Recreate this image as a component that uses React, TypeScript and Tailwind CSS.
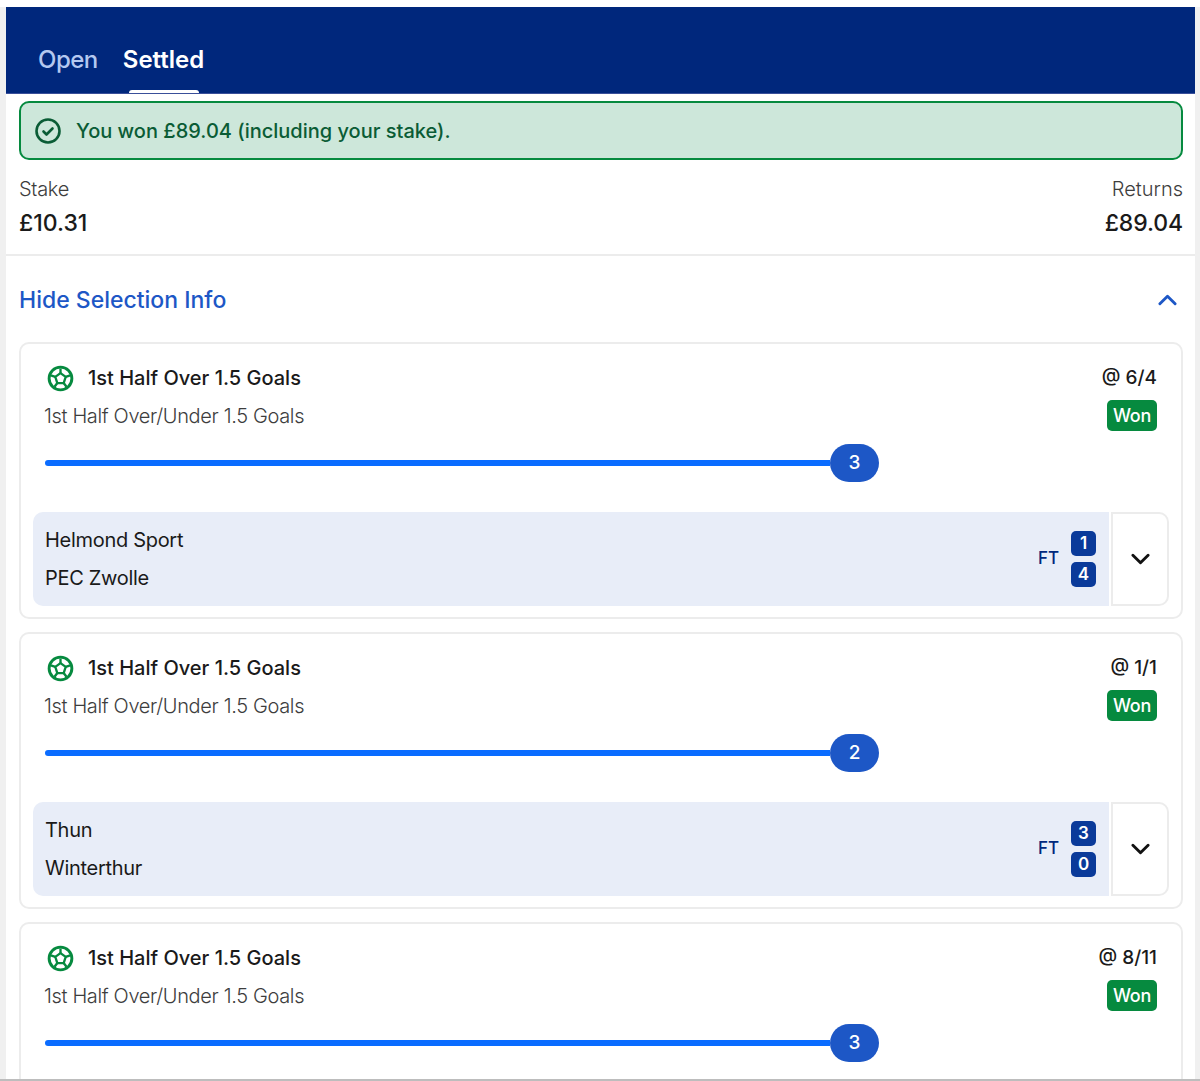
const font = { fontFamily: 'Inter, "Noto Sans", sans-serif' };

function Football() {
  return (
    <svg viewBox="0 0 28 28" className="w-[27px] h-[27px] shrink-0" fill="none" stroke="#068a3f" strokeWidth="3" strokeLinejoin="round">
      <circle cx="14" cy="14" r="11.8" />
      <path d="M14 8.4l5.4 3.9-2.1 6.4h-6.6l-2.1-6.4z" strokeWidth="2.4" />
      <path d="M14 8.4V3.5M19.4 12.3l4.6-1.5M17.3 18.7l2.9 3.9M10.7 18.7l-2.9 3.9M8.6 12.3l-4.6-1.5" strokeWidth="2.4" />
    </svg>
  );
}

function Chevron({ up, color, className }: { up?: boolean; color: string; className?: string }) {
  return (
    <svg viewBox="0 0 20 12" className={className} fill="none" stroke={color} strokeWidth="3" strokeLinecap="round" strokeLinejoin="round">
      <path d={up ? "M2 10l8-8 8 8" : "M2 2l8 8 8-8"} />
    </svg>
  );
}

function Score({ value }: { value: number }) {
  return (
    <div className="w-[25px] h-[25px] rounded-[5px] bg-[#0a3a9a] text-white text-[17px] font-semibold flex items-center justify-center">
      {value}
    </div>
  );
}

type Leg = { odds: string; count: number; home?: string; away?: string; scores?: number[] };

const legs: Leg[] = [
  { odds: "@ 6/4", count: 3, home: "Helmond Sport", away: "PEC Zwolle", scores: [1, 4] },
  { odds: "@ 1/1", count: 2, home: "Thun", away: "Winterthur", scores: [3, 0] },
  { odds: "@ 8/11", count: 3 },
];

function LegCard({ leg }: { leg: Leg }) {
  return (
    <div className="h-[277px] shrink-0 rounded-[10px] border-2 border-[#ececec] bg-white px-[12px]">
      <div className="flex justify-between pl-[11px] pr-[12px] pt-[14px]">
        <div>
          <div className="flex items-center gap-[14px] h-[40px] pl-[3px]">
            <Football />
            <span className="text-[20px] font-medium text-[#1a1a1a]">1st Half Over 1.5 Goals</span>
          </div>
          <div className="text-[20px] leading-[36px] font-light text-[#3d3d3d] tracking-[-0.35px]">1st Half Over/Under 1.5 Goals</div>
        </div>
        <div className="flex flex-col items-end">
          <span className="h-[40px] flex items-center text-[19px] font-medium text-[#1a1a1a]">{leg.odds}</span>
          <span className="mt-[2px] h-[31px] w-[50px] rounded-[5px] bg-[#068a3f] text-white text-[18px] font-medium tracking-[-0.2px] flex items-center justify-center">Won</span>
        </div>
      </div>
      <div className="flex items-center mt-[9px] h-[40px]">
        <div className="w-[785px] ml-[12px] h-[6px] rounded-l-full bg-[#0a6cff]" />
        <div className="w-[49px] h-[38px] rounded-[19px] bg-[#1d57c6] text-white text-[19px] font-medium flex items-center justify-center">
          {leg.count}
        </div>
      </div>
      {leg.home && (
        <div className="flex mt-[29px] h-[94px] gap-[2px]">
          <div className="flex-1 flex items-center justify-between rounded-l-[10px] bg-[#e8edf8] pl-[12px] pr-[13px]">
            <div className="text-[20px] leading-[38px] text-[#1a1a1a] tracking-[-0.3px]">
              <div>{leg.home}</div>
              <div>{leg.away}</div>
            </div>
            <div className="flex items-center gap-[12px]">
              <span className="text-[17px] font-medium text-[#00277c]">FT</span>
              <div className="flex flex-col gap-[6px]">
                {leg.scores!.map((s, i) => (
                  <Score key={i} value={s} />
                ))}
              </div>
            </div>
          </div>
          <div className="w-[58px] rounded-r-[10px] border-2 border-[#ececec] flex items-center justify-center">
            <Chevron color="#111111" className="w-[19px] h-[12px]" />
          </div>
        </div>
      )}
    </div>
  );
}

export default function App() {
  return (
    <div style={font} className="h-[1081px] overflow-hidden flex bg-[#f0f0f0] border-b-2 border-[#bdbdbd]">
      <div className="ml-[6px] w-[1189px] flex flex-col bg-white">
        <div className="h-[7px] -mx-[6px] w-[1200px] shrink-0 bg-white" />
        <div className="h-[87px] shrink-0 bg-[#00277c] flex items-end pl-[32px] border-b border-[#3a4f9a]">
          <div className="flex gap-[25px] text-[24px] font-medium">
            <span className="text-[#b4c8f0] pb-[15px] tracking-[-0.5px]">Open</span>
            <div className="relative pb-[15px] text-white font-semibold">
              Settled
              <span className="absolute left-[6px] bottom-0 w-[70px] h-[3px] rounded-t-[3px] bg-white" />
            </div>
          </div>
        </div>
        <div className="shrink-0 pl-[13px] pr-[12px] pt-[7px]">
          <div className="h-[59px] rounded-[10px] border-2 border-[#068a3f] bg-[#cde7da] flex items-center pl-[14px] gap-[15px]">
            <svg viewBox="0 0 26 26" className="w-[26px] h-[26px]" fill="none" stroke="#0a5c35" strokeWidth="2.6" strokeLinecap="round" strokeLinejoin="round">
              <circle cx="13" cy="13" r="11.5" />
              <path d="M8.5 13.5l3 3 6-6" />
            </svg>
            <span className="text-[20px] font-medium text-[#0a5c35]">You won £89.04 (including your stake).</span>
          </div>
        </div>
        <div className="flex justify-between shrink-0 pl-[13px] pr-[12px] pt-[14px] h-[96px] border-b-2 border-[#ececec]">
          <div>
            <div className="text-[20px] leading-[31px] font-light text-[#3d3d3d] tracking-[-0.3px]">Stake</div>
            <div className="text-[23px] leading-[36px] font-medium text-[#1a1a1a]">£10.31</div>
          </div>
          <div className="text-right">
            <div className="text-[20px] leading-[31px] font-light text-[#3d3d3d]">Returns</div>
            <div className="text-[23px] leading-[36px] font-medium text-[#1a1a1a] tracking-[-0.1px]">£89.04</div>
          </div>
        </div>
        <div className="flex items-center justify-between h-[86px] shrink-0 pt-[2px] pl-[13px] pr-[18px]">
          <span className="text-[23px] font-medium text-[#1d57c6]">Hide Selection Info</span>
          <Chevron up color="#1d57c6" className="w-[19px] h-[12px]" />
        </div>
        <div className="flex flex-col gap-[13px] pl-[13px] pr-[12px]">
          {legs.map((leg, i) => (
            <LegCard key={i} leg={leg} />
          ))}
        </div>
      </div>
    </div>
  );
}
